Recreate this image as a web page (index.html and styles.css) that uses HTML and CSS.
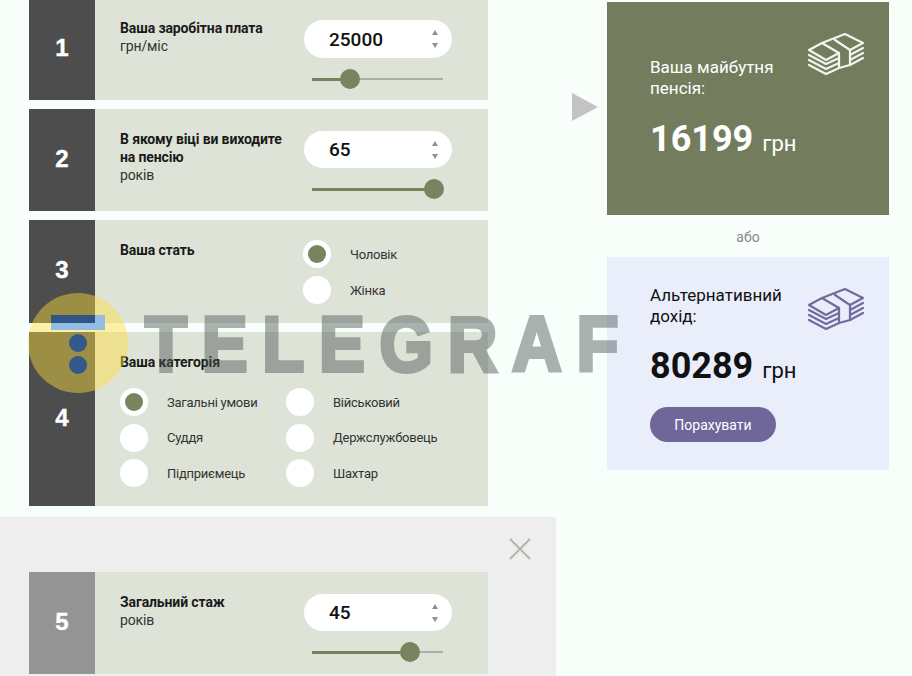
FILE: index.html
```html
<!DOCTYPE html>
<html lang="uk">
<head>
<meta charset="utf-8">
<title>Пенсійний калькулятор</title>
<link rel="stylesheet" href="styles.css">
</head>
<body>
<svg class="defs" width="0" height="0" aria-hidden="true">
  <symbol id="money" viewBox="0 0 56 42">
    <g fill="none" stroke="currentColor" stroke-width="2.2" stroke-linejoin="round" stroke-linecap="round">
      <path d="M1 17 L14 10 L31 20 L18 27 Z"/>
      <path d="M1 22 L18 31 L31 25"/>
      <path d="M1 27 L18 36 L31 30"/>
      <path d="M1 32 L18 41 L31 35 V20"/>
      <path d="M14 10 L37 1 L55 10 L42 17 L27 7"/>
      <path d="M42 17 V32 L31 35"/>
      <path d="M42 22 L55 15"/>
      <path d="M42 27 L55 20"/>
      <path d="M42 32 L55 25"/>
    </g>
  </symbol>
</svg>
<div class="page">
  <main class="left">
    <div class="steps">
      <section class="step step-a step-first">
        <div class="num">1</div>
        <div class="body">
          <div class="label"><b>Ваша заробітна плата</b><span>грн/міс</span></div>
          <div class="control">
            <div class="field"><span class="val">25000</span><span class="spin"><i class="up"></i><i class="down"></i></span></div>
            <div class="slider"><div class="fill" style="width:38px"><i class="thumb"></i></div></div>
          </div>
        </div>
      </section>
      <section class="step step-a">
        <div class="num">2</div>
        <div class="body">
          <div class="label"><b>В якому віці ви виходите на пенсію</b><span>років</span></div>
          <div class="control">
            <div class="field"><span class="val">65</span><span class="spin"><i class="up"></i><i class="down"></i></span></div>
            <div class="slider"><div class="fill" style="width:122px"><i class="thumb"></i></div></div>
          </div>
        </div>
      </section>
      <section class="step step-b">
        <div class="num">3</div>
        <div class="body">
          <div class="label"><b>Ваша стать</b></div>
          <div class="radios-one">
            <div class="radio on"><i></i><span>Чоловік</span></div>
            <div class="radio"><i></i><span>Жінка</span></div>
          </div>
        </div>
      </section>
      <section class="step step-c">
        <div class="num">4</div>
        <div class="body body-col">
          <div class="label"><b>Ваша категорія</b></div>
          <div class="radios-two">
            <div class="radio on"><i></i><span>Загальні умови</span></div>
            <div class="radio"><i></i><span>Військовий</span></div>
            <div class="radio"><i></i><span>Суддя</span></div>
            <div class="radio"><i></i><span>Держслужбовець</span></div>
            <div class="radio"><i></i><span>Підприємець</span></div>
            <div class="radio"><i></i><span>Шахтар</span></div>
          </div>
        </div>
      </section>
    </div>
    <div class="extra">
      <div class="extra-top">
        <svg class="close" viewBox="0 0 24 24" width="24" height="24"><path d="M2 2 L22 22 M22 2 L2 22"/></svg>
      </div>
      <section class="step step-a">
        <div class="num num-muted">5</div>
        <div class="body">
          <div class="label"><b>Загальний стаж</b><span>років</span></div>
          <div class="control">
            <div class="field"><span class="val">45</span><span class="spin"><i class="up"></i><i class="down"></i></span></div>
            <div class="slider"><div class="fill" style="width:98px"><i class="thumb"></i></div></div>
          </div>
        </div>
      </section>
    </div>
  </main>
  <div class="arrow"></div>
  <aside class="results">
    <div class="card card-main">
      <svg class="money" width="56" height="42"><use href="#money"/></svg>
      <p class="card-title">Ваша майбутня пенсія:</p>
      <p class="sum"><b>16199</b> <span>грн</span></p>
    </div>
    <div class="or">або</div>
    <div class="card card-alt">
      <svg class="money" width="56" height="42"><use href="#money"/></svg>
      <p class="card-title">Альтернативний дохід:</p>
      <p class="sum"><b>80289</b> <span>грн</span></p>
      <button class="calc" type="button">Порахувати</button>
    </div>
  </aside>
</div>
<div class="wm">
  <div class="wm-circle"></div>
  <div class="wm-bar"></div>
  <div class="wm-dot wm-dot1"></div>
  <div class="wm-dot wm-dot2"></div>
  <div class="wm-text">TELEGRAF</div>
</div>
</body>
</html>
```
FILE: styles.css
```css
* { box-sizing: border-box; }
html, body { margin: 0; height: 676px; overflow: hidden; }
body { background: #f8fffb; font-family: Roboto, "Noto Sans", sans-serif; color: #1a1a1a; position: relative; }
.defs { position: absolute; }
.page { display: flex; align-items: flex-start; }
.left { width: 556px; flex: none; margin-top: -2px; }
.steps { padding-left: 29px; display: flex; flex-direction: column; gap: 9px; }
.step { width: 459px; display: flex; background: #dee3d7; }
.step-a { height: 102px; }
.step-b { height: 103px; }
.step-c { height: 174px; }
.num { width: 66px; flex: none; background: #4d4d4d; color: #fff; font: 700 24px "Liberation Sans", sans-serif; -webkit-text-stroke: .4px #fff; display: flex; align-items: center; justify-content: center; padding-bottom: 3px; }
.num-muted { background: #949494; }
.body { flex: 1; display: flex; padding: 21px 36px 0 25px; justify-content: space-between; }
.body-col { flex-direction: column; justify-content: flex-start; }
.label { width: 170px; font-size: 14px; line-height: 18px; letter-spacing: -.12px; }
.label b { display: block; font-weight: 700; color: #1a1a1a; }
.label span { display: block; color: #333; }
.control { width: 148px; margin-top: 1px; }
.field { height: 37px; background: #fff; border-radius: 19px; display: flex; align-items: center; justify-content: space-between; padding: 0 14px 0 25px; }
.step-first .field { height: 38px; }
.val { font-size: 19px; font-weight: 500; color: #111; }
.spin { display: flex; flex-direction: column; gap: 8px; }
.spin i { display: block; width: 0; height: 0; border-left: 3px solid transparent; border-right: 3px solid transparent; }
.spin .up { border-bottom: 5px solid #8b9280; }
.spin .down { border-top: 5px solid #8b9280; }
.slider { margin: 20px 9px 0 8px; height: 2px; background: #aab0a4; position: relative; }
.fill { height: 3px; background: #78825f; position: relative; }
.thumb { position: absolute; right: -10px; top: -9px; width: 20px; height: 20px; border-radius: 50%; background: #78835f; }
.radios-one { width: 148px; display: flex; flex-direction: column; gap: 8px; margin: -1px 0 0 0; transform: translateX(-1px); }
.radio { display: flex; align-items: center; gap: 19px; font-size: 13px; letter-spacing: -.25px; color: #333; height: 28px; }
.radio i { width: 28px; height: 28px; flex: none; border-radius: 50%; background: #fff; display: flex; align-items: center; justify-content: center; }
.radio.on i::after { content: ""; width: 18px; height: 18px; border-radius: 50%; background: #78835f; }
.radios-two { display: grid; grid-template-columns: 166px 1fr; row-gap: 7.5px; margin-top: 17px; }
.extra { margin-top: 11px; background: #eeeeee; height: 161px; padding-left: 29px; }
.extra-top { height: 55px; position: relative; }
.close { position: absolute; left: 479px; top: 20px; fill: none; stroke: #b2b7ab; stroke-width: 2; }
.arrow { flex: none; width: 0; height: 0; margin: 93px 0 0 16px; border-left: 26px solid #c3c3c3; border-top: 14.5px solid transparent; border-bottom: 14.5px solid transparent; }
.results { margin: 2px 0 0 9px; width: 282px; flex: none; }
.card { position: relative; padding: 55px 20px 0 43px; }
.card p { margin: 0; }
.card-main { height: 213px; background: #737d5d; color: #fff; }
.card-alt { height: 213px; background: #eaeefa; color: #111; padding-top: 28px; }
.card-title { font-size: 17px; line-height: 21px; width: 140px; }
.sum { margin-top: 16px !important; line-height: 46px; }
.card-main .sum { margin-top: 17px !important; }
.sum b { font-size: 36px; font-weight: 700; }
.sum span { font-size: 22px; margin-left: 5px; }
.money { position: absolute; left: 201px; top: 31px; color: #f2f4ee; }
.card-alt .money { color: #736b9c; }
.or { height: 42px; text-align: center; color: #888; font-size: 14px; line-height: 44px; }
.calc { display: block; margin-top: 11px; width: 126px; height: 35px; border: 0; border-radius: 18px; background: #6f6799; color: #fff; font: 14px Roboto, sans-serif; }
.wm { position: absolute; left: 0; top: 0; width: 0; height: 0; }
.wm-circle { position: absolute; left: 28px; top: 293px; width: 100px; height: 100px; border-radius: 50%; background: rgba(255, 222, 60, .45); }
.wm-bar { position: absolute; left: 51px; top: 315px; width: 54px; height: 15px; background: linear-gradient(#2f5585, #2f5585) 0 0 / 44px 8px no-repeat #94bbe2; }
.wm-dot { position: absolute; left: 69px; width: 18px; height: 18px; border-radius: 50%; background: #33588a; }
.wm-dot1 { top: 334px; }
.wm-dot2 { top: 356px; }
.wm-text { position: absolute; left: 145px; top: 296px; font: 700 78px/96px "Liberation Sans", sans-serif; letter-spacing: 16.8px; transform: scaleX(.88); transform-origin: 0 0; color: #4b5555; -webkit-text-stroke: 4px #4b5555; opacity: .45; white-space: nowrap; }
```
